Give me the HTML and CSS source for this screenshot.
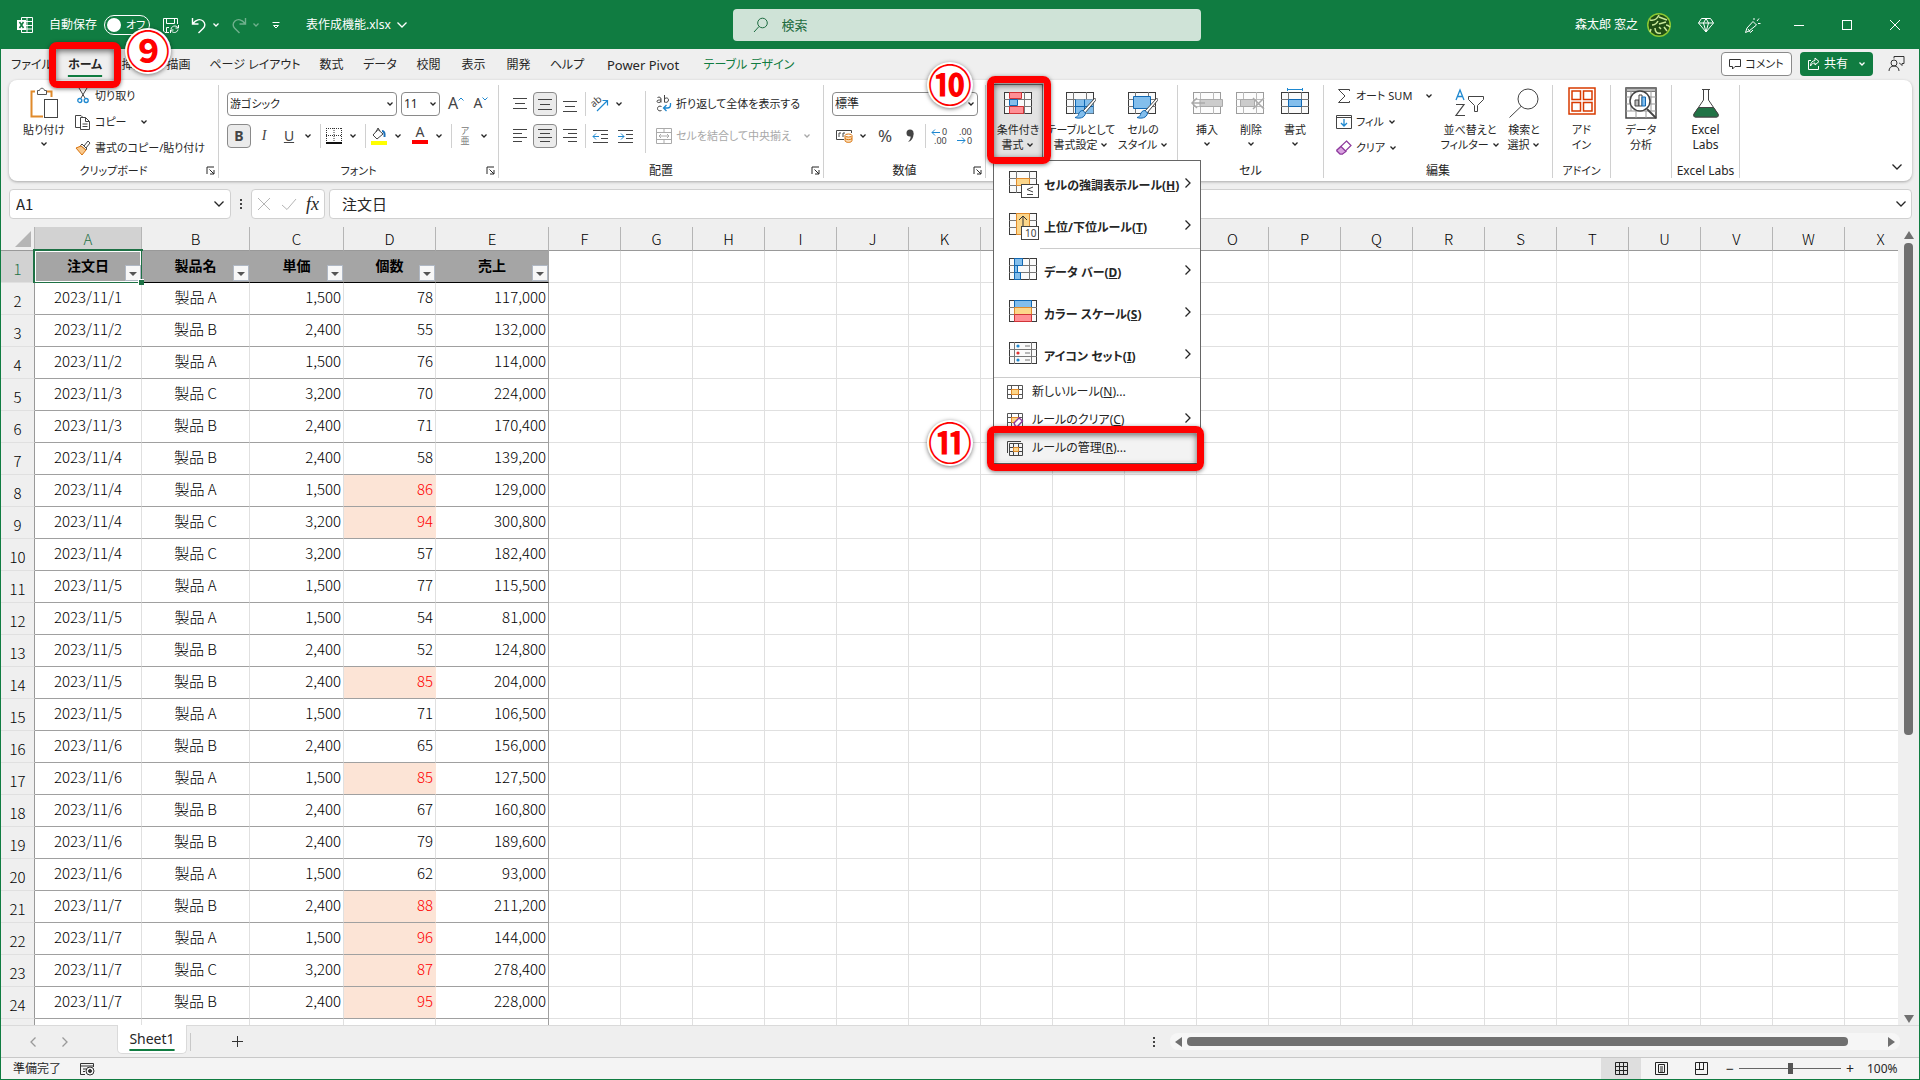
FILE: index.html
```html
<!DOCTYPE html>
<html lang="ja">

<head>
  <meta charset="UTF-8" />
  <title>表作成機能.xlsx</title>
  <meta name="viewport" content="width=device-width, initial-scale=1.0">
  <link rel="stylesheet" href="styles.css">
</head>

<body>
  <!-- 共通アイコン -->
  <svg class="defs" aria-hidden="true">
    <symbol id="chev" viewBox="0 0 8 8"><path d="M1.5 2.5 4 5l2.5-2.5" fill="none" stroke="currentColor" stroke-width="1.3" /></symbol>
    <symbol id="chev-l" viewBox="0 0 12 12"><path d="M1.5 3.5 6 8l4.500-4.500" fill="none" stroke="currentColor" stroke-width="1.3" /></symbol>
    <symbol id="next" viewBox="0 0 8 12"><path d="M1.500 1.500 6 6 1.500 10.500" fill="none" stroke="currentColor" stroke-width="1.3" /></symbol>
    <symbol id="launch" viewBox="0 0 9 9"><path d="M1 8V1h7M3.500 3.500 8 8M8 4v4H4" fill="none" stroke="currentColor" /></symbol>
    <symbol id="grid" viewBox="0 0 28 22"><rect x=".5" y=".5" width="27" height="21" fill="#fafafa" stroke="#3b3b3b" /><path d="M7.500 0v22M20.500 0v22M0 7.500h28M0 14.500h28" stroke="#777" fill="none" /></symbol>
    <symbol id="brush" viewBox="0 0 22 22"><path d="M20.500 1.500 9 14l2 2L21.500 3.500c.8-1.300 0-2.300-1-2Z" fill="#fff" stroke="#444" /><path d="M9 13.500c-3 0-4 2-4.500 4-.5 1.500-1.500 2.500-3.500 3 4 1.500 10 .5 10.500-4.500Z" fill="#83beec" stroke="#1168b3" /></symbol>
  </svg>

  <header class="titlebar">
    <div class="title-left">
      <svg class="app-icon" width="16" height="18" viewBox="0 0 16 18" fill="none" stroke="#fff"><path d="M4.500 4V1.500h11v15h-11V14M4.500 5.500h11M8 9.500h8M4.500 13h11M10 1.500v15" /><rect x="0" y="4" width="9" height="10" fill="#fff" stroke="none" /><path d="m2.500 6 4 6m0-6-4 6" stroke="#107c41" stroke-width="1.500" /></svg>
      <label class="autosave"><span>自動保存</span>
        <span class="switch"><input type="checkbox" role="switch"><i></i><b>オフ</b></span></label>
      <button class="tb save" aria-label="保存"><svg width="18" height="17" viewBox="0 0 18 17" fill="none" stroke="#fff"><path d="M7 15.500H3L1.500 14V1.500h14V7M4.500 1.500v5h8v-5M4.500 15.500v-5H7M16.500 8v3h-3M8.500 16v-3h3M9 12c.5-2 2-3 3.800-3 1.500 0 2.800.8 3.500 2M16 12.500c-.5 2-2 3-3.500 3s-2.900-.8-3.600-2.200" /></svg></button>
      <button class="tb undo" aria-label="元に戻す"><svg width="16" height="17" viewBox="0 0 16 17" fill="none" stroke="#fff" stroke-width="1.400"><path d="M1.500 1v6h6M2 6.500C5 2.500 9 1.500 12 4c2.500 2.200 2.300 5.200.3 7.200L7.500 16" /></svg><svg class="c"><use href="#chev" /></svg></button>
      <button class="tb undo dim" aria-label="やり直し"><svg width="16" height="17" viewBox="0 0 16 17" fill="none" stroke="#fff" stroke-width="1.400"><path d="M14.500 1v6h-6M14 6.500C11 2.500 7 1.500 4 4 1.500 6.200 1.700 9.200 3.700 11.200L8.500 16" /></svg><svg class="c"><use href="#chev" /></svg></button>
      <button class="tb custom" aria-label="ユーザー設定"><svg width="8" height="9" viewBox="0 0 8 9" fill="none" stroke="#fff"><path d="M.5 1.500h7M1.500 4.500 4 7l2.500-2.500z" /></svg></button>
      <button class="tb fname">表作成機能.xlsx <svg class="cl"><use href="#chev-l" /></svg></button>
    </div>
    <label class="search"><svg width="16" height="16" viewBox="0 0 16 16" fill="none" stroke="#1d6b40"><circle cx="9.500" cy="6" r="4.800" /><path d="M6 9.500 1 15" /></svg><input type="text" placeholder="検索" aria-label="検索"></label>
    <div class="title-right">
      <span class="user">森太郎 窓之</span>
      <svg class="avatar" width="24" height="24" viewBox="0 0 24 24"><circle cx="12" cy="12" r="12" fill="#8cc832" /><circle cx="12" cy="12" r="10.500" fill="#1f4d14" /><path d="M3 7c4 1 7-1 9-5M12 4l8 3M5 12c4 0 5-2 6-4M12 11l7-2M19 12c1 0 3 1 4 2M8 15c0 4 2 6 6 5M4 16l-1 3M17 14l3 4M12 14l2 2" stroke="#c8e89a" stroke-width="1.500" fill="none" /></svg>
      <svg class="gem" width="16" height="16" viewBox="0 0 16 16" fill="none" stroke="#fff"><path d="M3.500 1.500h9l3 4.500L8 15 .5 6zM.5 6h15M5.500 6 8 15l2.500-9L8 1.500z" /></svg>
      <svg class="pen" width="17" height="17" viewBox="0 0 17 17" fill="none" stroke="#fff"><path d="M9 4.500 12.500 8 5 14l-3.500 1.500L3 11zM4 12l2.500 3.500L9 13M10 1v2M13 4l2-2.500M14 6.500h2.500" /></svg>
      <button class="win" aria-label="最小化"><svg width="10" height="10" stroke="#fff"><path d="M0 5.500h10" /></svg></button>
      <button class="win" aria-label="最大化"><svg width="10" height="10" stroke="#fff" fill="none"><rect x=".5" y=".5" width="9" height="9" /></svg></button>
      <button class="win" aria-label="閉じる"><svg width="10" height="10" stroke="#fff"><path d="m0 0 10 10M10 0 0 10" /></svg></button>
    </div>
  </header>

  <nav class="tabs">
    <button class="t-file">ファイル</button>
    <button class="t-three active">ホーム</button>
    <button class="t-two">挿入</button>
    <button class="t-two">描画</button>
    <button class="t-page">ページ レイアウト</button>
    <button class="t-two">数式</button>
    <button class="t-three">データ</button>
    <button class="t-two">校閲</button>
    <button class="t-two">表示</button>
    <button class="t-two">開発</button>
    <button class="t-three">ヘルプ</button>
    <button class="t-pivot">Power Pivot</button>
    <button class="t-design">テーブル デザイン</button>
    <div class="tab-actions">
      <button class="comment"><svg width="12" height="12" viewBox="0 0 12 12" fill="none" stroke="#333"><path d="M.5 1.500h11v7H6L3.500 11V8.500h-3z" /></svg>コメント</button>
      <button class="share"><svg width="13" height="13" viewBox="0 0 13 13" fill="none" stroke="#fff"><path d="M4 3.500H1.500v9h10V9M8 1l4 3.500L8 8V6C6 6 4.500 7 3.500 9c0-3 1.500-5 4.500-5.500z" /></svg>共有<svg class="c"><use href="#chev" /></svg></button>
      <svg class="person" width="17" height="17" viewBox="0 0 17 17" fill="none" stroke="#333"><circle cx="6" cy="8" r="3" /><path d="M1 16c0-3 2-5 5-5s5 2 5 5M6 3.500v-2h10v7h-2v2l-2.500-2.500H11" /></svg>
    </div>
  </nav>

  <section class="ribbon">
    <div class="group g-clip">
      <div class="tools">
        <button class="big"><svg width="28" height="32" viewBox="0 0 28 32" fill="none"><path d="M5 4.500H1.500v25H13M17 4.500h4.500V10" stroke="#e08a2b" stroke-width="2" /><path d="M7.500 3.500h2C10 .5 14 .5 14.500 3.500h2v4h-9z" fill="#fff" stroke="#555" /><rect x="14.500" y="12.500" width="13" height="18" fill="#fff" stroke="#444" /></svg><span>貼り付け</span><svg class="c"><use href="#chev" /></svg></button>
        <div class="stack">
          <button><svg width="12" height="16" viewBox="0 0 12 16" fill="none"><path d="m2 0 6 10M10 0 4 10" stroke="#444" /><circle cx="2.800" cy="12.500" r="2" stroke="#1e88d0" stroke-width="1.300" /><circle cx="9.200" cy="12.500" r="2" stroke="#1e88d0" stroke-width="1.300" /></svg><span>切り取り</span></button>
          <button><svg width="16" height="16" viewBox="0 0 16 16" fill="#fff" stroke="#444"><path d="M6 1.500H.5v12H5M6 1.500l2 2" /><path d="M5.500 3.500h5l4 4v8h-9zM10.500 3.500v4h4M7.500 10h5M7.500 12.500h5" /></svg><span>コピー</span><svg class="c far"><use href="#chev" /></svg></button>
          <button><svg width="16" height="16" viewBox="0 0 16 16" fill="none"><path d="m9 6 4-5 2 2-4 5M7 4l5 5-1.500 1L5.500 5.500z" fill="#fff" stroke="#444" /><path d="M6 6 1 8l6 7 4-5z" fill="#f9c98d" stroke="#d9730d" /></svg><span>書式のコピー/貼り付け</span></button>
        </div>
      </div>
      <div class="caption">クリップボード<button class="launcher" aria-label="詳細"><svg><use href="#launch" /></svg></button></div>
    </div>

    <div class="group g-font">
      <div class="tools rows">
        <div class="row">
          <span class="combo c-font"><select aria-label="フォント"><option>游ゴシック</option></select><svg class="c"><use href="#chev" /></svg></span>
          <span class="combo c-size"><select aria-label="フォント サイズ"><option>11</option></select><svg class="c"><use href="#chev" /></svg></span>
          <button class="ib grow">A<svg width="6" height="4" fill="none" stroke="#1e88d0"><path d="M.5 3.500 3 1l2.500 2.500" /></svg></button>
          <button class="ib grow small">A<svg width="6" height="4" fill="none" stroke="#1e88d0"><path d="M.5.5 3 3 5.500.5" /></svg></button>
        </div>
        <div class="row">
          <button class="ib on"><b>B</b></button>
          <button class="ib"><i class="ital">I</i></button>
          <button class="ib"><u>U</u></button>
          <button class="dd" aria-label="下線"><svg class="c"><use href="#chev" /></svg></button>
          <span class="sep"></span>
          <button class="ib" aria-label="罫線"><svg width="16" height="16" fill="none" stroke="#333"><path d="M.5 0v14M15.500 0v14M8 0v14M0 .5h16M0 7.500h16" stroke-dasharray="1 1" /><path d="M0 15h16" stroke-width="2" stroke="#111" /></svg></button>
          <button class="dd" aria-label="罫線の種類"><svg class="c"><use href="#chev" /></svg></button>
          <span class="sep"></span>
          <button class="ib" aria-label="塗りつぶし"><svg width="16" height="17" fill="none"><path d="M7 1.500 2 7l4 4 6-5zM5 4l2-4 2 3" stroke="#444" /><path d="M11 3c2 0 3 2 2.500 6" stroke="#1e70b8" stroke-width="2" /><path d="M0 13h16v4H0z" fill="#ff0" /></svg></button>
          <button class="dd" aria-label="色"><svg class="c"><use href="#chev" /></svg></button>
          <span class="gap"></span>
          <button class="ib fc">A</button>
          <button class="dd" aria-label="文字色"><svg class="c"><use href="#chev" /></svg></button>
          <span class="sep"></span>
          <button class="ib ruby"><small>ア</small><small>亜</small></button>
          <button class="dd" aria-label="ふりがな"><svg class="c"><use href="#chev" /></svg></button>
        </div>
      </div>
      <div class="caption">フォント<button class="launcher" aria-label="詳細"><svg><use href="#launch" /></svg></button></div>
    </div>

    <div class="group g-align">
      <div class="tools">
        <div class="rows">
          <div class="row">
            <button class="ib" aria-label="上揃え"><svg width="14" height="14" stroke="#444"><path d="M0 1.500h14M2 6.500h10M0 11.500h14" /></svg></button>
            <button class="ib on" aria-label="上下中央"><svg width="14" height="14" stroke="#444"><path d="M0 2.500h14M2 7.500h10M0 12.500h14" /></svg></button>
            <button class="ib" aria-label="下揃え"><svg width="14" height="16" stroke="#444"><path d="M0 5.500h14M2 10.500h10M0 15.500h14" /></svg></button>
            <span class="sep"></span>
            <button class="ib" aria-label="方向"><svg width="18" height="18" viewBox="0 0 18 18" fill="none"><text class="ab" x="0" y="10" transform="rotate(-40 5 8)">ab</text><path d="M6 16 16 6M11.500 5.500h5v5" stroke="#1e88d0" stroke-width="1.200" /></svg></button>
            <button class="dd" aria-label="方向の種類"><svg class="c"><use href="#chev" /></svg></button>
          </div>
          <div class="row">
            <button class="ib" aria-label="左揃え"><svg width="14" height="14" stroke="#444"><path d="M0 .5h14M0 4.500h9M0 8.500h14M0 12.500h9" /></svg></button>
            <button class="ib on" aria-label="中央揃え"><svg width="14" height="14" stroke="#444"><path d="M0 .5h14M2 4.500h10M0 8.500h14M2 12.500h10" /></svg></button>
            <button class="ib" aria-label="右揃え"><svg width="14" height="14" stroke="#444"><path d="M0 .5h14M5 4.500h9M0 8.500h14M5 12.500h9" /></svg></button>
            <span class="sep"></span>
            <button class="ib" aria-label="インデントを減らす"><svg width="15" height="13" fill="none" stroke="#444"><path d="M0 .5h15M8 4.500h7M8 8.500h7M0 12.500h15" /><path d="M0 6.500h6M3 3.500l-3 3 3 3" stroke="#1e88d0" /></svg></button>
            <button class="ib" aria-label="インデントを増やす"><svg width="15" height="13" fill="none" stroke="#444"><path d="M0 .5h15M8 4.500h7M8 8.500h7M0 12.500h15" /><path d="M0 6.500h6M3 3.500l3 3-3 3" stroke="#1e88d0" /></svg></button>
          </div>
        </div>
        <span class="sep tall"></span>
        <div class="rows wraps">
          <button class="line"><svg width="16" height="18" viewBox="0 0 16 18" fill="none"><path d="M1.500 2.500c2-1 3.500 0 3.500 1.500v3.500M5 5C3 5 1 5 1 6.300 1 8 4 8 5 6.300M8.500 0v7.500M8.500 4c1-1.500 4-1.500 4 1s-3 3-4 1.500M5.500 11.500c-2-1-4 0-4 2s2 3 4 2" stroke="#444" /><path d="M14.500 8v2c0 2-1 3-3 3H8M10.500 10l-3 3 3 3" stroke="#1e88d0" stroke-width="1.300" /></svg><span>折り返して全体を表示する</span></button>
          <button class="line off" disabled><svg width="16" height="16" fill="none" stroke="#aaa"><path d="M.5.5h15v15H.5zM.5 4.500h15M.5 11.500h15M8 .5v4M8 11.500v4M3 8h10M5 6 3 8l2 2M11 6l2 2-2 2" /></svg><span>セルを結合して中央揃え</span><svg class="c"><use href="#chev" /></svg></button>
        </div>
      </div>
      <div class="caption">配置<button class="launcher" aria-label="詳細"><svg><use href="#launch" /></svg></button></div>
    </div>

    <div class="group g-num">
      <div class="tools rows">
        <div class="row"><span class="combo c-num"><select aria-label="表示形式"><option>標準</option></select><svg class="c"><use href="#chev" /></svg></span></div>
        <div class="row">
          <button class="ib" aria-label="通貨"><svg width="17" height="14" viewBox="0 0 17 14" fill="none"><path d="M8 10.500H.5v-9h15V4M3 8V4h2M7 8V4h2" stroke="#444" /><path d="M9 7v4.500c0 2.500 7 2.500 7 0V7M9 9.500c1 1.500 6 1.500 7 0" fill="#fbdcb4" stroke="#d9730d" /><ellipse cx="12.500" cy="6.500" rx="3.500" ry="1.500" fill="#fff" stroke="#d9730d" /></svg></button>
          <button class="dd" aria-label="通貨の種類"><svg class="c"><use href="#chev" /></svg></button>
          <span class="gap"></span>
          <button class="ib pct">%</button>
          <button class="ib" aria-label="桁区切り"><svg width="8" height="14"><circle cx="4" cy="4" r="3.500" fill="#444" /><path d="M7.500 4c.2 5-2 8-5.500 9 2-2 3-4 2.500-6z" fill="#444" /></svg></button>
          <span class="sep"></span>
          <button class="ib" aria-label="小数点以下を増やす"><svg width="16" height="17" fill="none"><text class="dec" x="10" y="7">0</text><text class="dec" x="2" y="16">.00</text><path d="M0 4.500h8M3 1.500l-3 3 3 3" stroke="#1e88d0" /></svg></button>
          <button class="ib" aria-label="小数点以下を減らす"><svg width="16" height="17" fill="none"><text class="dec" x="2" y="7">.00</text><text class="dec" x="10" y="16">0</text><path d="M0 12.500h8M5 9.500l3 3-3 3" stroke="#1e88d0" /></svg></button>
        </div>
      </div>
      <div class="caption">数値<button class="launcher" aria-label="詳細"><svg><use href="#launch" /></svg></button></div>
    </div>

    <div class="group g-style">
      <div class="tools">
        <div class="cond">
          <button class="big open"><svg width="28" height="30" viewBox="0 -4 28 30"><use href="#grid" width="28" height="22" /><path d="M5.500.5h12v6h-12zM5.500 14.500h14v7h-14z" fill="#ff8f95" stroke="#d13438" /><path d="M5.500 7.500h8v6h-8z" fill="#83beec" stroke="#1168b3" /></svg><span>条件付き</span><span>書式 <svg class="c"><use href="#chev" /></svg></span></button>
          <div class="menu" role="menu">
            <button class="mi"><svg width="30" height="28"><use href="#grid" width="28" height="22" /><path d="M7.500 7.500h13v7h-13z" fill="#fcd68a" stroke="#e08a2b" /><rect x="12.500" y="13.500" width="17" height="13" fill="#fff" stroke="#444" /><path d="m24 16-6 2.500 6 2.500M18 23.500h6" fill="none" stroke="#444" /></svg><span>セルの強調表示ルール(<u>H</u>)</span><svg class="nx"><use href="#next" /></svg></button>
            <button class="mi"><svg width="30" height="28"><use href="#grid" width="28" height="22" /><path d="M7.500.5h13v21h-13z" fill="#fcd68a" stroke="#e08a2b" /><path d="M14 13V3M10 7l4-4 4 4" fill="none" stroke="#333" /><rect x="12.500" y="13.500" width="17" height="13" fill="#fff" stroke="#444" /><text class="ten" x="16" y="24">10</text></svg><span>上位/下位ルール(<u>T</u>)</span><svg class="nx"><use href="#next" /></svg></button>
            <hr class="short">
            <button class="mi"><svg width="30" height="28"><use href="#grid" width="28" height="22" /><path d="M5.500.5h8v7h-8zM5.500 7.500h3v7h-3zM5.500 14.500h6v7h-6z" fill="#83beec" stroke="#1168b3" /></svg><span>データ バー(<u>D</u>)</span><svg class="nx"><use href="#next" /></svg></button>
            <button class="mi"><svg width="30" height="28"><use href="#grid" width="28" height="22" /><path d="M5.500.5h17v7h-17z" fill="#83beec" stroke="#1168b3" /><path d="M5.500 7.500h17v7h-17z" fill="#fcd68a" stroke="#e08a2b" /><path d="M5.500 14.500h17v7h-17z" fill="#ff8f95" stroke="#d13438" /></svg><span>カラー スケール(<u>S</u>)</span><svg class="nx"><use href="#next" /></svg></button>
            <button class="mi"><svg width="30" height="28"><rect x=".5" y=".5" width="27" height="21" fill="#fafafa" stroke="#3b3b3b" /><path d="M5.500 0v22M22.500 0v22M0 7.500h28M0 14.500h28M16 4h5M16 11h5M16 18h5" stroke="#777" /><circle cx="9" cy="4" r="1.600" fill="#1e88d0" /><circle cx="9" cy="11" r="1.600" fill="#e03030" /><circle cx="9" cy="18" r="1.600" fill="#1e88d0" /></svg><span>アイコン セット(<u>I</u>)</span><svg class="nx"><use href="#next" /></svg></button>
            <hr>
            <button class="mi sm"><svg width="16" height="14"><path d="M.5.5h15v13H.5zM4.500 0v14M11.500 0v14M0 4.500h16M0 9.500h16" fill="none" stroke="#555" /><path d="M4.500 4.500h7v5h-7z" fill="#fcd68a" stroke="#e08a2b" /></svg><span>新しいルール(<u>N</u>)...</span></button>
            <button class="mi sm"><svg width="16" height="14"><path d="M.5.5h15v13H.5zM4.500 0v14M11.500 0v14M0 4.500h16M0 9.500h16" fill="none" stroke="#555" /><path d="M4.500 4.500h7v5h-7z" fill="#fcd68a" stroke="#e08a2b" /><path d="m7 10 5-5 3.500 3-5 5.500h-2z" fill="#fff" stroke="#8e3a9d" stroke-width="1.400" /></svg><span>ルールのクリア(<u>C</u>)</span><svg class="nx"><use href="#next" /></svg></button>
            <button class="mi sm hot"><svg width="16" height="15"><path d="M.5 12V.5H14M2.500 2.500h13v12h-13zM6.500 2v13M11.500 2v13M2 6.500h14M2 10.500h14" fill="none" stroke="#444" /><path d="M6.500 6.500h5v4h-5z" fill="#fcd68a" stroke="#e08a2b" /></svg><span>ルールの管理(<u>R</u>)...</span></button>
          </div>
        </div>
        <button class="big w62"><svg width="30" height="30" viewBox="0 -4 30 30"><use href="#grid" width="28" height="22" /><path d="M9.500 7.500h18v14h-18z" fill="#83beec" /><path d="M9.500 7.500v14M18.500 7.500v14M9.500 14.500h18" stroke="#1168b3" /><use href="#brush" x="8" y="5" width="22" height="22" /></svg><span>テーブルとして</span><span>書式設定 <svg class="c"><use href="#chev" /></svg></span></button>
        <button class="big w62"><svg width="30" height="30" viewBox="0 -4 30 30"><use href="#grid" width="28" height="22" /><path d="M5.500 4.500h17v12h-17z" fill="#83beec" stroke="#1168b3" /><use href="#brush" x="8" y="5" width="22" height="22" /></svg><span>セルの</span><span>スタイル <svg class="c"><use href="#chev" /></svg></span></button>
      </div>
      <div class="caption"></div>
    </div>

    <div class="group g-cell">
      <div class="tools">
        <button class="big w44"><svg width="32" height="30" viewBox="-2 -4 32 30"><g opacity=".5"><use href="#grid" width="28" height="22" /></g><path d="M7 7.500h22.500v7H7z" fill="#ccc" stroke="#aaa" /><path d="M-1 11h13M4 6l-5 5 5 5" fill="none" stroke="#aaa" stroke-width="1.500" /></svg><span>挿入</span><svg class="c"><use href="#chev" /></svg></button>
        <button class="big w44"><svg width="30" height="30" viewBox="0 -4 30 30"><g opacity=".5"><use href="#grid" width="28" height="22" /></g><path d="M4.500 7.500h14v7h-14z" fill="#ccc" stroke="#aaa" /><path d="m17 6 11 11M28 6 17 17" stroke="#aaa" stroke-width="1.500" /></svg><span>削除</span><svg class="c"><use href="#chev" /></svg></button>
        <button class="big w44"><svg width="28" height="30" viewBox="0 -4 28 30"><use href="#grid" width="28" height="22" /><path d="M7.500 7.500h13v7h-13z" fill="#83beec" stroke="#1168b3" /><path d="M6 -2.500h16M6.500-4v3M21.500-4v3" stroke="#1e88d0" /></svg><span>書式</span><svg class="c"><use href="#chev" /></svg></button>
      </div>
      <div class="caption">セル</div>
    </div>

    <div class="group g-edit">
      <div class="tools">
        <div class="stack">
          <button><svg width="16" height="16" fill="none" stroke="#444"><path d="M13.500 3V1.500h-11L9 8l-6.500 6.500h11V13" /></svg><span>オート SUM</span><svg class="c far"><use href="#chev" /></svg></button>
          <button><svg width="16" height="16" fill="none" stroke="#444"><path d="M.5 1.500h15v13H.5zM.5 3.500h15" /><path d="M8 5v7M5 9l3 3 3-3" stroke="#1e88d0" stroke-width="1.300" /></svg><span>フィル</span><svg class="c"><use href="#chev" /></svg></button>
          <button><svg width="16" height="16" fill="none" stroke="#8e3a9d" stroke-width="1.200"><path d="M10.500 1 15 5.500 6.500 14H4L1 11v-1z" /><path d="m5 6.500 5 5L6.500 14H4L1 11v-1z" fill="#d9a3e0" /></svg><span>クリア</span><svg class="c"><use href="#chev" /></svg></button>
        </div>
        <button class="big w54"><svg width="30" height="30" viewBox="0 0 30 30" fill="none"><path d="m1 12 4-10 4 10M2.500 8.500h5" stroke="#1e88d0" stroke-width="1.300" /><path d="M1 16.500h8L1 27.500h9" stroke="#444" stroke-width="1.200" /><path d="M13.500 8.500h15v3l-6 6v6h-3v-6l-6-6z" stroke="#444" /></svg><span>並べ替えと</span><span>フィルター <svg class="c"><use href="#chev" /></svg></span></button>
        <button class="big w54"><svg width="30" height="30" viewBox="0 0 30 30" fill="none" stroke="#444"><circle cx="19" cy="11" r="10" /><path d="M12 18.500.5 29.500" /></svg><span>検索と</span><span>選択 <svg class="c"><use href="#chev" /></svg></span></button>
      </div>
      <div class="caption">編集</div>
    </div>

    <div class="group g-addin">
      <div class="tools"><button class="big"><svg width="28" height="28" fill="none" stroke="#d83b01" stroke-width="1.500"><path d="M1 1h26v26H1zM4 4h8.500v8.500H4zM15.500 4H24v8.500h-8.500zM4 15.500h8.500V24H4zM15.500 15.500H24V24h-8.500z" /></svg><span>アド</span><span>イン</span></button></div>
      <div class="caption">アドイン</div>
    </div>

    <div class="group g-data">
      <div class="tools"><button class="big"><svg width="32" height="32" fill="#fff" stroke="#444"><path d="M1 1h30v30H1z" stroke-width="1.500" /><path d="M1.500 1.500h29v3h-29z" fill="#bbb" stroke="#777" /><path d="M1 10h30M1 17h30M1 24h30M11 24v7M21 24v7M6 4v20M26 4v20" stroke="#999" /><circle cx="15" cy="14" r="10" stroke-width="1.500" /><path d="m22 22 9 9" stroke-width="1.800" /><path d="M10 13h4v6h-4z" fill="#bbb" /><path d="M14 8h3v11h-3z" /><path d="M17 10h3.500v9H17z" fill="#83beec" stroke="#1168b3" /></svg><span>データ</span><span>分析</span></button></div>
      <div class="caption"></div>
    </div>

    <div class="group g-labs">
      <div class="tools"><button class="big"><svg width="28" height="30" viewBox="0 0 28 30"><path d="M10 1.500h8M11.500 1.500V12L2 26c-.5 2 0 3 1.500 3h21c1.500 0 2-1 1.500-3l-9.500-14V1.500" fill="#fff" stroke="#444" /><path d="M6.500 19.500h15L26 26c.5 2 0 3-1.500 3h-21C2 29 1.500 28 2 26z" fill="#217346" stroke="#444" /></svg><span class="latin">Excel</span><span class="latin">Labs</span></button></div>
      <div class="caption">Excel Labs</div>
    </div>
    <button class="collapse" aria-label="リボンを折りたたむ"><svg class="cl"><use href="#chev-l" /></svg></button>
  </section>

  <section class="formula">
    <label class="namebox"><input type="text" value="A1" aria-label="名前ボックス"><svg class="cl"><use href="#chev-l" /></svg></label>
    <span class="dots"></span>
    <div class="fx">
      <svg width="14" height="14" stroke="#b5b5b5"><path d="m1 1 12 12M13 1 1 13" /></svg>
      <svg width="16" height="14" stroke="#b5b5b5" fill="none"><path d="m1 8 5 4.500L15 2" /></svg>
      <em>fx</em>
    </div>
    <label class="fbox"><input type="text" value="注文日" aria-label="数式バー"><svg class="cl"><use href="#chev-l" /></svg></label>
  </section>

  <main class="sheet">
    <div class="viewport">
      <table id="grid-table"></table>
    </div>
    <div class="vscroll"><i class="up"></i><div class="vtrack"><b></b></div><i class="down"></i></div>
  </main>

  <section class="sheetbar">
    <svg class="prev" width="8" height="12"><use href="#next" /></svg>
    <svg width="8" height="12" class="nxt"><use href="#next" /></svg>
    <button class="sheet-tab">Sheet1</button>
    <span class="vline"></span>
    <button class="plus" aria-label="新しいシート"><svg width="11" height="11" stroke="#333"><path d="M5.500 0v11M0 5.500h11" /></svg></button>
    <span class="dots"></span>
    <div class="hscroll"><i class="left"></i><div class="htrack"><b></b></div><i class="right"></i></div>
  </section>

  <footer class="status">
    <span>準備完了</span>
    <svg class="macro" width="15" height="14" fill="none" stroke="#333"><path d="M5 12.500H.5V1.500h13V5M.5 4h13M3 7h3M3 9.500h2" /><circle cx="10" cy="9" r="4" /><circle cx="10" cy="9" r="1.500" fill="#333" /></svg>
    <div class="views">
      <button class="on" aria-label="標準"><svg width="13" height="13" fill="none" stroke="#222"><path d="M.5.5h12v12H.5zM4.500 0v13M8.500 0v13M0 4.500h13M0 8.500h13" /></svg></button>
      <button aria-label="ページ レイアウト"><svg width="13" height="13" fill="none" stroke="#222"><path d="M.5.5h12v12H.5zM3.500 2.500h6v8h-6zM5 5h3M5 7h3M5 9h3" /></svg></button>
      <button aria-label="改ページ プレビュー"><svg width="13" height="13" fill="none" stroke="#222"><path d="M.5.5h12v12H.5zM4.500 0v7.500M8.500 0v7.500M0 7.500h9" /></svg></button>
    </div>
    <button class="zb">−</button>
    <input class="zoom" type="range" min="0" max="100" value="50" aria-label="ズーム">
    <button class="zb">+</button>
    <span class="pct100">100%</span>
  </footer>

  <!-- 手順の番号と枠 -->
  <div class="frame f9"></div>
  <div class="frame f10"></div>
  <div class="frame f11"></div>
  <span class="num n9">⑨</span>
  <span class="num n10">⑩</span>
  <span class="num n11">⑪</span>

  <script src="sheet.js"></script>
</body>

</html>
```

FILE: styles.css
```css
* {
  box-sizing: border-box;
}

body {
  margin: 0;
  height: 100vh;
  display: flex;
  flex-direction: column;
  position: relative;
  overflow: hidden;
  background: #efefef;
  color: #262626;
  border: 1px solid #107c41;
  border-top: 0;
  font: 12px/14px "Noto Sans", "Noto Sans CJK JP", sans-serif;
  font-feature-settings: "palt";
}

button,
input,
select {
  font: inherit;
  font-feature-settings: inherit;
  color: inherit;
  background: none;
  border: 0;
  padding: 0;
  margin: 0;
  outline: 0;
}

button {
  white-space: nowrap;
}

.defs {
  display: none;
}

svg {
  flex: none;
  overflow: visible;
}

.c {
  width: 8px;
  height: 8px;
}

.cl {
  width: 12px;
  height: 12px;
}

/* タイトルバー */
.titlebar {
  flex: none;
  height: 49px;
  padding: 9px 0 8px;
  background: #107c41;
  color: #fff;
  display: flex;
  align-items: center;
}

.title-left,
.title-right {
  flex: 1;
  display: flex;
  align-items: center;
}

.title-left {
  padding-left: 16px;
}

.autosave {
  display: flex;
  align-items: center;
  gap: 7px;
  margin-left: 16px;
}

.switch {
  width: 46px;
  height: 20px;
  border: 1px solid #fff;
  border-radius: 10px;
  display: flex;
  align-items: center;
  padding: 0 2px;
  gap: 5px;
}

.switch input {
  position: absolute;
  opacity: 0;
}

.switch i {
  flex: none;
  width: 14px;
  height: 14px;
  border-radius: 50%;
  background: #fff;
}

.switch b {
  font-weight: normal;
  font-size: 11px;
  white-space: nowrap;
}

.tb {
  display: flex;
  align-items: center;
}

.save {
  margin-left: 12px;
}

.undo {
  margin-left: 11px;
  gap: 5px;
  width: 29px;
}

.dim {
  opacity: 0.4;
}

.custom {
  margin-left: 12px;
}

.fname {
  margin-left: 26px;
  gap: 5px;
}

.search {
  width: 468px;
  height: 32px;
  margin-left: 16px;
  border-radius: 4px;
  background: #cfe3d7;
  display: flex;
  align-items: center;
  padding-left: 20px;
  gap: 13px;
}

.search input {
  flex: 1;
  font-size: 13px;
}

.search input::placeholder {
  color: #1d6b40;
  opacity: 1;
}

.title-right {
  justify-content: flex-end;
  padding-right: 19px;
}

.avatar {
  margin: 0 27px 0 9px;
}

.pen {
  margin: 0 33px 0 30px;
}

.win {
  display: flex;
  margin-left: 38px;
}

.pen + .win {
  margin-left: 0;
}

/* タブ */
.tabs {
  flex: none;
  height: 31px;
  display: flex;
  align-items: center;
  padding-left: 4px;
  line-height: 24px;
}

.t-file {
  width: 54px;
}

.t-two {
  width: 45px;
}

.t-page {
  width: 108px;
}

.t-three {
  width: 52px;
}

.t-pivot {
  width: 100px;
  font-size: 13px;
}

.t-design {
  width: 112px;
  color: #107c41;
}

.tabs .active {
  font-weight: bold;
  text-decoration: underline;
  text-decoration-color: #107c41;
  text-decoration-thickness: 2px;
  text-underline-offset: 6px;
}

.tab-actions {
  margin-left: auto;
  display: flex;
  align-items: center;
  padding: 0 14px 2px 0;
}

.comment,
.share {
  height: 24px;
  display: flex;
  align-items: center;
  justify-content: center;
  gap: 4px;
  border-radius: 4px;
}

.comment {
  width: 71px;
  background: #fff;
  border: 1px solid #8a8a8a;
  font-size: 11px;
}

.share {
  width: 73px;
  margin: 0 15px 0 8px;
  background: #107c41;
  color: #fff;
}

.share .c {
  margin-left: 6px;
}

/* リボン */
.ribbon {
  flex: none;
  height: 101px;
  margin: 0 7px 0 8px;
  background: #fff;
  border-radius: 8px;
  box-shadow: 0 1px 3px rgba(0, 0, 0, 0.3);
  display: flex;
  padding: 5px 0 3px;
  font-size: 11px;
}

.group {
  flex: none;
  display: flex;
  flex-direction: column;
  justify-content: space-between;
  border-right: 1px solid #d0d0d0;
}

.tools {
  display: flex;
}

.caption {
  height: 14px;
  text-align: center;
  position: relative;
  font-size: 12px;
}

.g-clip .caption,
.g-font .caption,
.g-addin .caption {
  font-size: 11px;
}

.launcher {
  position: absolute;
  right: 3px;
  top: 2px;
}

.launcher svg {
  display: block;
  width: 9px;
  height: 9px;
}

.g-clip {
  width: 210px;
}

.g-font {
  width: 280px;
}

.g-align {
  width: 325px;
}

.g-num {
  width: 162px;
}

.g-style {
  width: 192px;
}

.g-cell {
  width: 146px;
}

.g-edit {
  width: 229px;
}

.g-addin {
  width: 58px;
}

.g-data {
  width: 61px;
}

.g-labs {
  width: 68px;
}

.big {
  width: 100%;
  display: flex;
  flex-direction: column;
  align-items: center;
  height: 72px;
}

.big > svg:first-child {
  margin: 2px 0 3px;
  height: 32px;
}

.big > span {
  line-height: 15px;
}

.big > .c {
  margin-top: 3px;
}

.latin {
  font-size: 12px;
}

.g-clip .big {
  width: 70px;
}

.w62 {
  width: 62px;
}

.w54 {
  width: 54px;
}

.w44 {
  width: 44px;
}

.stack {
  display: flex;
  flex-direction: column;
  margin-top: -2px;
}

.stack button {
  height: 26px;
  display: flex;
  align-items: center;
  gap: 4px;
}

.stack button > svg:first-child {
  width: 16px;
}

.g-clip .stack {
  margin-left: -4px;
}

.g-edit .stack {
  margin-right: 9px;
  margin-left: 12px;
  width: 98px;
}

.far {
  margin-left: 9px;
}

.rows {
  display: flex;
  flex-direction: column;
  gap: 8px;
  padding-top: 7px;
}

.row {
  display: flex;
  height: 24px;
}

.g-font .tools,
.g-num .tools {
  padding-left: 8px;
}

.g-align .tools {
  padding-left: 9px;
}

.ib {
  width: 24px;
  height: 24px;
  margin-right: 1px;
  display: flex;
  align-items: center;
  justify-content: center;
  border-radius: 4px;
  font-size: 14px;
  color: #444;
}

.on {
  background: #ebebeb;
}

.ib.on {
  border: 1px solid #8a8a8a;
}

.ital {
  font-family: "Liberation Serif", serif;
}

.dd {
  width: 14px;
  margin-left: -1px;
  display: flex;
  align-items: center;
  justify-content: center;
}

.gap {
  width: 3px;
}

.sep {
  width: 1px;
  background: #d0d0d0;
  margin: 0 1px 0 5px;
}

.g-align .row .sep,
.g-num .row .sep {
  margin: 0 2px;
}

.g-align .tall {
  margin: 6px 0 0;
  height: 62px;
}

.combo {
  position: relative;
  display: flex;
  margin-right: 4px;
}

.combo select {
  width: 100%;
  height: 24px;
  appearance: none;
  background: #fff;
  border: 1px solid #8a8a8a;
  border-radius: 4px;
  padding-left: 2px;
}

.combo .c {
  position: absolute;
  right: 3px;
  top: 8px;
}

.c-font {
  width: 170px;
}

.c-size {
  width: 39px;
  font-size: 12px;
}

.c-num {
  width: 146px;
  font-size: 12px;
}

.grow {
  font-size: 16px;
  align-items: flex-start;
  line-height: 22px;
}

.grow.small {
  font-size: 14px;
}

.grow svg {
  margin-top: 5px;
}

.fc {
  height: 20px;
  line-height: 16px;
  border-bottom: 4px solid #f00;
  border-radius: 0;
  width: 16px;
  margin: 0 5px 0 4px;
}

.ruby {
  flex-direction: column;
}

.ruby small {
  font-size: 9px;
  line-height: 10px;
  color: #777;
}

.ab,
.ten {
  font-size: 10px;
  fill: #444;
}

.dec {
  font-size: 9px;
  fill: #444;
}

.ten {
  font-weight: normal;
}

.pct {
  font-size: 17px;
}

.g-align > .tools > .rows:first-child {
  width: 137px;
}

.wraps {
  padding-left: 10px;
}

.line {
  height: 24px;
  display: flex;
  align-items: center;
  gap: 4px;
}

.off {
  color: #a8a8a8;
}

.off .c {
  margin-left: 8px;
}

/* 条件付き書式メニュー */
.cond {
  position: relative;
  width: 64px;
}

.cond .open {
  width: 50px;
  margin-left: 7px;
  background: #e3e3e3;
  border: 1px solid #777;
  height: 76px;
  margin-top: -1px;
}

.menu {
  position: absolute;
  z-index: 5;
  left: 7px;
  top: 75px;
  width: 208px;
  background: #fff;
  border: 1px solid #666;
  padding: 3px 0 1px;
  display: flex;
  flex-direction: column;
  font-size: 12px;
}

.mi {
  height: 42px;
  display: flex;
  align-items: center;
  padding: 0 8px 0 15px;
  gap: 5px;
  font-weight: bold;
}

.mi > span {
  padding-top: 2px;
}

.mi .nx {
  width: 8px;
  height: 12px;
  margin: 0 0 4px auto;
}

.mi.sm {
  height: 28px;
  font-weight: normal;
  padding-left: 13px;
  gap: 9px;
}

.mi.sm > span {
  padding-top: 0;
}

.mi.hot {
  background: #f3f3f3;
}

.menu hr {
  width: 206px;
  height: 1px;
  margin: 0;
  border: 0;
  background: #ccc;
}

.menu .short {
  width: 160px;
  margin: 0 0 2px 46px;
}

.g-cell .tools {
  padding-left: 7px;
}

.collapse {
  margin: auto 9px 2px auto;
}

/* 数式バー */
.formula {
  flex: none;
  height: 46px;
  padding: 8px 7px 8px 8px;
  display: flex;
  font: 15px/20px "Noto Sans CJK JP", sans-serif;
}

.namebox,
.fx,
.fbox {
  height: 30px;
  background: #fff;
  border: 1px solid #d0d0d0;
  border-radius: 4px;
  display: flex;
  align-items: center;
}

.namebox {
  width: 222px;
  padding: 0 5px 0 6px;
}

.namebox input,
.fbox input {
  flex: 1;
  min-width: 0;
}

.dots {
  width: 20px;
  display: flex;
  align-items: center;
  justify-content: center;
}

.dots::after {
  content: "";
  width: 2px;
  height: 10px;
  background: repeating-linear-gradient(#444 0 2px, transparent 2px 4px);
}

.fx {
  width: 74px;
  padding: 0 5px;
  justify-content: space-between;
}

.fx em {
  font: italic 18px "Liberation Serif", serif;
}

.fbox {
  flex: 1;
  margin-left: 4px;
  padding: 0 4px 0 12px;
}

/* シート */
.sheet {
  flex: 1;
  min-height: 0;
  display: flex;
}

.viewport {
  flex: 1;
  min-width: 0;
  overflow: hidden;
}

table {
  table-layout: fixed;
  border-collapse: separate;
  border-spacing: 0;
  width: 1878px;
  font: 15px/20px "Noto Sans CJK JP", sans-serif;
  color: #000;
  font-weight: 300;
}

td,
th {
  height: 32px;
  padding: 0 2px 3px;
  font-weight: 300;
  background: #fff;
  border-right: 1px solid #e0e0e0;
  border-bottom: 1px solid #e0e0e0;
  position: relative;
}

thead th {
  height: 24px;
  padding-bottom: 0;
  background: #efefef;
  border-right-color: #b5b5b5;
  border-bottom-color: #999;
}

tbody th[scope="row"] {
  background: #efefef;
  border-right-color: #999;
  padding: 5px 2px 0;
}

thead th.sel,
tbody th.sel[scope="row"] {
  background: #d2d2d2;
  color: #1e7145;
}

.corner::after {
  content: "";
  position: absolute;
  right: 3px;
  bottom: 3px;
  border: 8px solid transparent;
  border-right-color: #b5b5b5;
  border-bottom-color: #b5b5b5;
}

.data {
  border-bottom-color: #a0a0a0;
}

.data.last {
  border-right-color: #a0a0a0;
}

.mid-cell {
  text-align: center;
}

.right-cell {
  text-align: right;
}

.hit {
  background: #fce4d6;
  color: #f00;
  border-color: #fce4d6;
  border-bottom-color: #a0a0a0;
}

.head {
  background: #a5a5a5;
  font-size: 14px;
  font-weight: bold;
  border-right-color: #a5a5a5;
  border-bottom-color: #000;
}

.head button {
  position: absolute;
  right: 0;
  bottom: 1px;
  width: 16px;
  height: 16px;
  background: #f7f7f7;
  border: 1px solid #b0b8c4;
}

.head button::after {
  content: "";
  position: absolute;
  left: 3px;
  top: 6px;
  border: 4px solid transparent;
  border-top-color: #555;
  border-bottom: 0;
}

.cursor::before {
  content: "";
  position: absolute;
  inset: -2px;
  border: 2px solid #1e7145;
  box-shadow: inset 0 0 0 1px #fff;
}

.cursor::after {
  content: "";
  position: absolute;
  z-index: 1;
  right: -3px;
  bottom: -3px;
  width: 5px;
  height: 5px;
  background: #1e7145;
  border: 1px solid #fff;
  border-width: 1px 0 0 1px;
  box-sizing: content-box;
}

.vscroll {
  width: 21px;
  display: flex;
  flex-direction: column;
  align-items: center;
  padding: 4px 0 2px;
  gap: 4px;
}

.vtrack {
  flex: 1;
  width: 9px;
}

.vtrack b {
  display: block;
  height: 64%;
  border-radius: 4px;
  background: #707070;
}

.up,
.down,
.left,
.right {
  border: 5px solid transparent;
}

.up {
  border-bottom: 8px solid #707070;
  border-top: 0;
}

.down {
  border-top: 8px solid #707070;
  border-bottom: 0;
}

.left {
  border-right: 7px solid #707070;
  border-left: 0;
}

.right {
  border-left: 7px solid #707070;
  border-right: 0;
}

/* シート見出し */
.sheetbar {
  flex: none;
  height: 32px;
  display: flex;
  align-items: center;
  border-top: 1px solid #dadada;
  padding: 0 19px 0 28px;
}

.sheetbar > svg {
  color: #999;
}

.prev {
  transform: scaleX(-1);
}

.nxt {
  margin-left: 24px;
}

.sheet-tab {
  align-self: flex-start;
  width: 70px;
  height: 29px;
  margin: -1px 3px 0 48px;
  background: #fff;
  border: 1px solid #dadada;
  border-top: 0;
  border-radius: 0 0 5px 5px;
  font-size: 14px;
  text-decoration: underline;
  text-decoration-color: #107c41;
  text-decoration-thickness: 2px;
  text-underline-offset: 5px;
}

.vline {
  width: 1px;
  height: 18px;
  background: #c8c8c8;
}

.plus {
  margin-left: 41px;
  display: flex;
}

.sheetbar .dots {
  margin-left: auto;
}

.hscroll {
  width: 39%;
  height: 17px;
  margin-left: 6px;
  padding: 0 5px;
  border-radius: 8px;
  background: #f6f6f6;
  display: flex;
  align-items: center;
  gap: 5px;
}

.htrack {
  flex: 1;
}

.htrack b {
  display: block;
  width: 95%;
  height: 9px;
  border-radius: 4px;
  background: #707070;
}

/* ステータスバー */
.status {
  flex: none;
  height: 22px;
  display: flex;
  align-items: center;
  background: #f4f4f4;
  border-top: 1px solid #c8c8c8;
  padding: 0 18px 0 12px;
}

.macro {
  margin-left: 19px;
}

.views {
  margin-left: auto;
  display: flex;
  align-self: stretch;
}

.views button {
  width: 40px;
  display: flex;
  align-items: center;
  justify-content: center;
}

.views .on {
  background: #dedede;
}

.zb {
  width: 18px;
  font-size: 14px;
}

.zoom {
  width: 102px;
  height: 16px;
  appearance: none;
  background: linear-gradient(#666, #666) center / 100% 1px no-repeat;
}

.zoom::-webkit-slider-thumb {
  appearance: none;
  width: 5px;
  height: 11px;
  background: #555;
}

.pct100 {
  margin-left: 8px;
  width: 34px;
}

/* 手順の枠と番号 */
.frame {
  position: absolute;
  z-index: 10;
  border: 7px solid #f00;
  border-radius: 8px;
  box-shadow: 0 1px 4px rgba(0, 0, 0, 0.5), inset 0 2px 6px rgba(0, 0, 0, 0.6);
}

.f9 {
  left: 48px;
  top: 42px;
  width: 72px;
  height: 46px;
}

.f10 {
  left: 986px;
  top: 76px;
  width: 64px;
  height: 88px;
}

.f11 {
  left: 986px;
  top: 426px;
  width: 217px;
  height: 45px;
}

.num {
  position: absolute;
  z-index: 11;
  width: 46px;
  height: 46px;
  padding-bottom: 4px;
  border-radius: 50%;
  background: #fff;
  box-shadow: 0 1px 4px rgba(0, 0, 0, 0.5);
  color: #f00;
  font: bold 44px/44px "Noto Sans CJK JP", sans-serif;
  display: flex;
  align-items: center;
  justify-content: center;
}

.n9 {
  left: 124px;
  top: 28px;
}

.n10 {
  left: 926px;
  top: 62px;
}

.n11 {
  left: 926px;
  top: 420px;
}
```

FILE: sheet.js
```js
// 日付, 製品, 単価, 個数, 売上
const ROWS = [
  ['2023/11/1', '製品 A', '1,500', 78, '117,000'],
  ['2023/11/2', '製品 B', '2,400', 55, '132,000'],
  ['2023/11/2', '製品 A', '1,500', 76, '114,000'],
  ['2023/11/3', '製品 C', '3,200', 70, '224,000'],
  ['2023/11/3', '製品 B', '2,400', 71, '170,400'],
  ['2023/11/4', '製品 B', '2,400', 58, '139,200'],
  ['2023/11/4', '製品 A', '1,500', 86, '129,000'],
  ['2023/11/4', '製品 C', '3,200', 94, '300,800'],
  ['2023/11/4', '製品 C', '3,200', 57, '182,400'],
  ['2023/11/5', '製品 A', '1,500', 77, '115,500'],
  ['2023/11/5', '製品 A', '1,500', 54, '81,000'],
  ['2023/11/5', '製品 B', '2,400', 52, '124,800'],
  ['2023/11/5', '製品 B', '2,400', 85, '204,000'],
  ['2023/11/5', '製品 A', '1,500', 71, '106,500'],
  ['2023/11/6', '製品 B', '2,400', 65, '156,000'],
  ['2023/11/6', '製品 A', '1,500', 85, '127,500'],
  ['2023/11/6', '製品 B', '2,400', 67, '160,800'],
  ['2023/11/6', '製品 B', '2,400', 79, '189,600'],
  ['2023/11/6', '製品 A', '1,500', 62, '93,000'],
  ['2023/11/7', '製品 B', '2,400', 88, '211,200'],
  ['2023/11/7', '製品 A', '1,500', 96, '144,000'],
  ['2023/11/7', '製品 C', '3,200', 87, '278,400'],
  ['2023/11/7', '製品 B', '2,400', 95, '228,000'],
  ['', '', '', '', '']
];
const HEAD = ['注文日', '製品名', '単価', '個数', '売上'];
const WIDTHS = [34, 107, 108, 94, 92, 113];
const COLS = 24;
const EMPTY = '<td></td>'.repeat(COLS - 5);

let html = '<colgroup>';
for (let i = 0; i <= COLS; i++) html += `<col style="width:${WIDTHS[i] || 72}px">`;
html += '</colgroup><thead><tr><th class="corner"></th>';
for (let i = 0; i < COLS; i++) {
  html += `<th scope="col"${i === 0 ? ' class="sel"' : ''}>${String.fromCharCode(65 + i)}</th>`;
}
html += '</tr></thead><tbody><tr><th scope="row" class="sel">1</th>';
HEAD.forEach((h, i) => {
  html += `<td class="head mid-cell${i === 0 ? ' cursor' : ''}">${h}<button aria-label="${h}のフィルター"></button></td>`;
});
html += EMPTY + '</tr>';

ROWS.forEach((r, n) => {
  html += `<tr><th scope="row">${r[0] ? n + 2 : ''}</th>`;
  r.forEach((v, i) => {
    let cls = 'data ' + (i < 2 ? 'mid-cell' : 'right-cell');
    // 80 以上を強調
    if (i === 3 && v > 80) cls += ' hit';
    if (i === 4) cls += ' last';
    html += `<td class="${cls}">${v}</td>`;
  });
  html += EMPTY + '</tr>';
});
document.getElementById('grid-table').innerHTML = html + '</tbody>';
```
